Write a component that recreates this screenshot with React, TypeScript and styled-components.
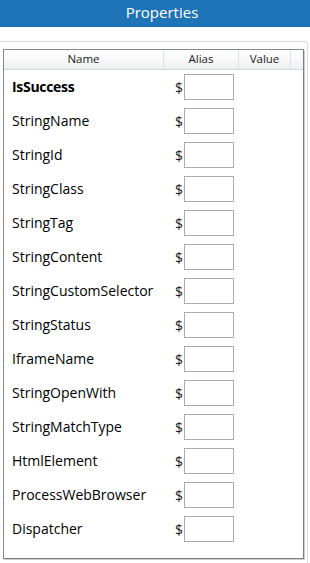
import React from 'react';
import styled, { createGlobalStyle } from 'styled-components';

const GlobalStyle = createGlobalStyle`
  html, body {
    margin: 0;
    padding: 0;
    background: #ffffff;
    font-family: 'Open Sans', 'Noto Sans', sans-serif;
  }
`;

interface Property {
  name: string;
  bold?: boolean;
}

const properties: Property[] = [
  { name: 'IsSuccess', bold: true },
  { name: 'StringName' },
  { name: 'StringId' },
  { name: 'StringClass' },
  { name: 'StringTag' },
  { name: 'StringContent' },
  { name: 'StringCustomSelector' },
  { name: 'StringStatus' },
  { name: 'IframeName' },
  { name: 'StringOpenWith' },
  { name: 'StringMatchType' },
  { name: 'HtmlElement' },
  { name: 'ProcessWebBrowser' },
  { name: 'Dispatcher' },
];

const App: React.FC = () => {
  return (
    <Page>
      <GlobalStyle />
      <TitleBar>Properties</TitleBar>
      <Panel>
        <Grid>
          <HeaderRow>
            <HeaderCell width={159}>Name</HeaderCell>
            <HeaderCell width={74}>Alias</HeaderCell>
            <HeaderCell width={51}>Value</HeaderCell>
            <HeaderFiller />
          </HeaderRow>
          {properties.map(prop => (
            <Row key={prop.name}>
              <NameCell bold={prop.bold}>{prop.name}</NameCell>
              <AliasCell>
                <Dollar>$</Dollar>
                <AliasBox />
              </AliasCell>
            </Row>
          ))}
        </Grid>
      </Panel>
    </Page>
  );
};

export default App;

const Page = styled.div`
  width: 310px;
  height: 563px;
  overflow: hidden;
  display: flex;
  flex-direction: column;
`;

const TitleBar = styled.div`
  height: 27px;
  background: #1f74b7;
  color: #ffffff;
  font-size: 15px;
  line-height: 25px;
  text-align: center;
  padding-left: 14px;
  flex-shrink: 0;
`;

const Panel = styled.div`
  margin-top: 14px;
  margin-left: -6px;
  margin-right: 2px;
  flex: 1;
  border-top: 1px solid #d5dde4;
  border-right: 1px solid #d5dde4;
  border-top-right-radius: 4px;
  padding: 7px 3px 0 9px;
`;

const Grid = styled.div`
  height: 508px;
  border: 1px solid #858a92;
  border-right-color: #7a7f86;
  border-bottom-color: #7a7f86;
  box-shadow: 1px 1px 0 #c9ccd0;
  background: #ffffff;
`;

const HeaderRow = styled.div`
  display: flex;
  height: 19px;
  border-bottom: 1px solid #d5d5d5;
  background: linear-gradient(#ffffff 0%, #fafafa 40%, #eeeff1 100%);
`;

const HeaderCell = styled.div<{ width: number }>`
  width: ${p => p.width}px;
  flex-shrink: 0;
  border-right: 1px solid #dde0e4;
  font-size: 11.5px;
  line-height: 18px;
  text-align: center;
  color: #1a1a1a;
`;

const HeaderFiller = styled.div`
  flex: 1;
`;

const Row = styled.div`
  display: flex;
  align-items: center;
  height: 34px;
`;

const NameCell = styled.div<{ bold?: boolean }>`
  width: 164px;
  padding-left: 8px;
  box-sizing: border-box;
  font-size: 14px;
  line-height: 18px;
  font-weight: ${p => (p.bold ? 700 : 400)};
  color: #000000;
  letter-spacing: ${p => (p.bold ? '-0.3px' : '0')};
`;

const AliasCell = styled.div`
  display: flex;
  align-items: center;
  gap: 1px;
  padding-left: 7px;
`;

const Dollar = styled.span`
  font-size: 14px;
  color: #222222;
`;

const AliasBox = styled.div`
  width: 48px;
  height: 24px;
  border: 1px solid #ababab;
  background: #ffffff;
`;
